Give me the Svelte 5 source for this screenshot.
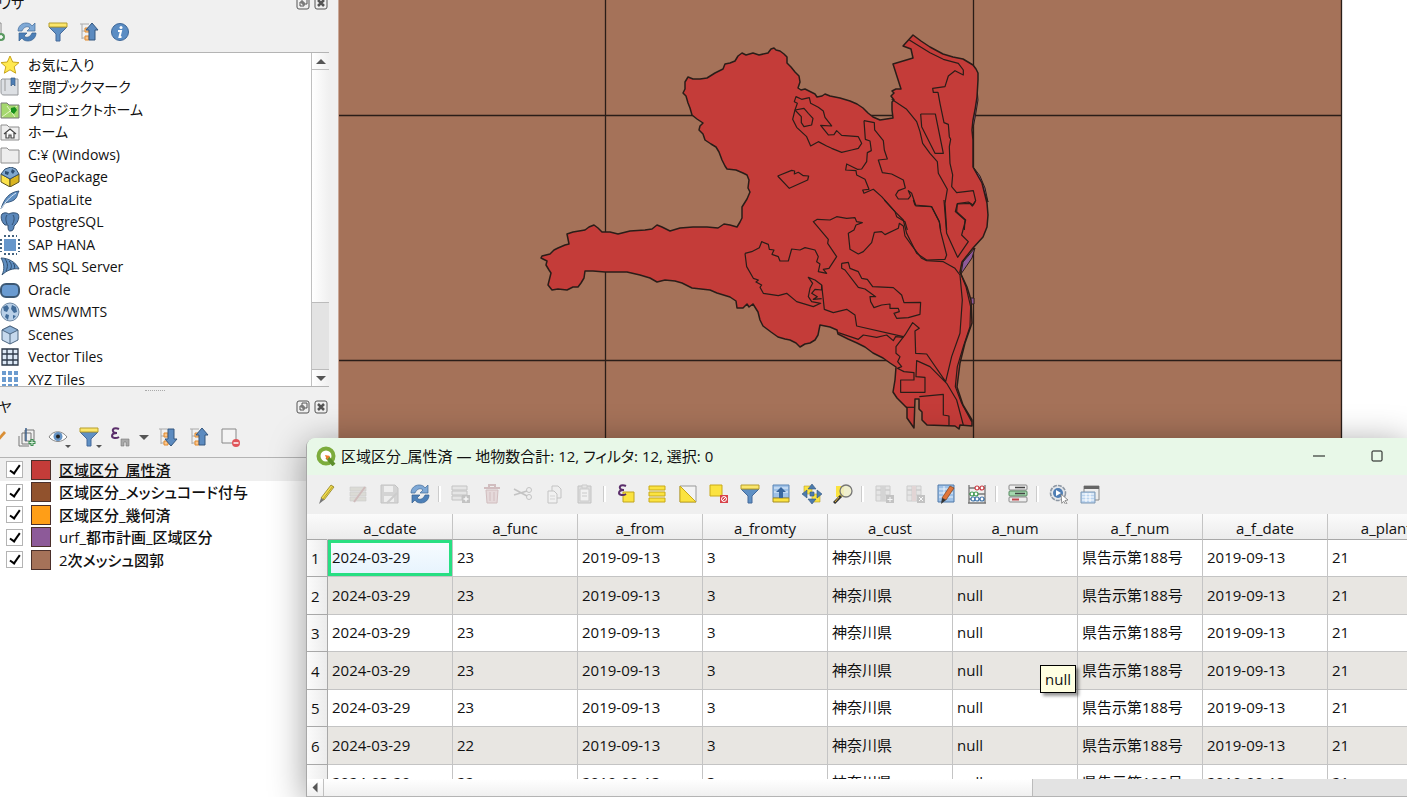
<script lang="ts">
  type Layer = { name: string; color: string; visible: boolean; current?: boolean };
  type Tool = { icon: string; label: string; off?: boolean; menu?: boolean };

  const arrowUp = '<path d="M13 1l6 7h-3v10h-6V8H7z" fill="#5c8bc0" stroke="#34577f"/>';
  const treeRows =
    '<path d="M1 2h9M3 2v15M3 9h3M3 16h3" stroke="#aaa" fill="none"/><path d="M6 6h4v4H6zM6 14h4v4H6z" fill="#fcc58b" stroke="#e08a2c"/>';
  const minus = '<circle cx="16" cy="16" r="4" fill="#e0555a"/><path d="M13.500 16h5" stroke="#fff" stroke-width="1.500"/>';

  // 20x20 drawings
  const icons: Record<string, string> = {
    add: '<path d="M4 1h11v17H4z" fill="#fff" stroke="#888"/><circle cx="15" cy="15" r="4" fill="#5a9a62"/><path d="M15 13v4M13 15h4" stroke="#fff" stroke-width="1.500"/>',
    refresh:
      '<path d="M1 9C1 4 5 1 9 1c3 0 5 1 6 3l3-3v8h-8l3-3c-3-3-7 0-8 3z" fill="#7fa9d6" stroke="#416a99" stroke-width=".7"/><path d="M19 11c0 5-4 8-8 8-3 0-5-1-6-3l-3 3v-8h8l-3 3c3 3 7 0 8-3z" fill="#4d80b8" stroke="#345e8e" stroke-width=".7"/>',
    filter:
      '<path d="M1 5h18l-7 7v7H8v-7z" fill="#5f90c4" stroke="#44699a"/><path d="M1 1h18v4H1z" fill="#fbe66c" stroke="#b79e2c"/>',
    collapse: treeRows + arrowUp,
    expand: treeRows + '<path d="M13 19l6-7h-3V2h-6v10H7z" fill="#5c8bc0" stroke="#34577f"/>',
    info: '<circle cx="10" cy="10" r="8.500" fill="#5b8dc4" stroke="#3e6798"/><circle cx="11" cy="5.500" r="1.500" fill="#fff"/><path d="M8 9h3l-1.500 6h2" stroke="#fff" stroke-width="2" fill="none"/>',
    star: '<path d="M10 1l2.700 6 6.300.6-4.800 4.200 1.500 6.400L10 14.800l-5.700 3.400 1.500-6.400L1 7.600 7.300 7z" fill="#ffe94f" stroke="#c9a51c"/>',
    bookmark:
      '<path d="M2 2h16v16H4c-2 0-3-1-3-3V3z" fill="#dde0e4" stroke="#94979b"/><path d="M5 2v12" stroke="#999"/><path d="M11 1h4v8l-2-2-2 2z" fill="#4f7fb5" stroke="#365b86" stroke-width=".7"/>',
    project:
      '<path d="M1 3h6l2 2h10v13H1z" fill="#a5d86e" stroke="#787878"/><path d="M2 17L17 6M7 6l8 11" stroke="#e8f6c9"/><path d="M11 8l4-1 2 3-3 4-3-2z" fill="#178f1c"/>',
    home: '<path d="M1 3h6l2 2h10v13H1z" fill="#eee" stroke="#8e8e8e"/><path d="M4 12l6-5 6 5M6 11v5h3v-3h2v3h3v-5" fill="#fff" stroke="#444" stroke-width="1.200"/>',
    folder: '<path d="M1 3h6l2 2h10v13H1z" fill="#ededed" stroke="#8e8e8e"/>',
    geopackage:
      '<path d="M1 7l9 5v8l-9-5z" fill="#fbe14a" stroke="#5b5220"/><path d="M19 7l-9 5v8l9-5z" fill="#d9b420" stroke="#5b5220"/><path d="M1 7l4-5 6-2 5 2 3 5-9 5z" fill="#7fa7cf" stroke="#34506f"/><path d="M5 4l4 1-1 3-3-1zM12 2l3 2-2 3-2-2z" fill="#2c4c70"/>',
    feather:
      '<path d="M1 19C4 8 10 2 19 1c-2 3-1 6-5 9-3 2-6 2-9 3z" fill="#5f8fc2" stroke="#395a80"/><path d="M1 19C6 11 10 7 16 3" stroke="#dce9f6" fill="none"/>',
    elephant:
      '<path d="M2 2c3-2 5-1 7 0 3-2 8-1 9 0 2 3 0 8-3 11l-1 1c0 3-1 5-4 5-2 0-2-3-2-6H5C2 11 0 5 2 2z" fill="#5b88bb" stroke="#314e70"/><path d="M7 3c-2 3-1 6 0 9M13 3c2 3 1 7-1 10" stroke="#314e70" fill="none"/>',
    chip: '<path d="M4 4h12v12H4z" fill="#6797cb"/><path d="M4 1h13M4 19h13M1 4v13M19 4v13" stroke="#43627f" stroke-width="2" stroke-dasharray="2 2"/>',
    mssql:
      '<path d="M1 1c7 0 15 4 18 11-6-1-12 1-17 6 3-6 2-12-1-17z" fill="#5f8fc2" stroke="#3a5878"/><path d="M5 2c3 4 3 8 1 12M9 4c3 3 3 6 1 9M13 6c2 2 2 4 1 6" stroke="#2e4c6d" fill="none"/>',
    oracle: '<rect x="1" y="4" width="18" height="13" rx="5" fill="#6a9bd1" stroke="#3c5874" stroke-width="2"/>',
    globe:
      '<circle cx="10" cy="10" r="9" fill="#b9d0e8" stroke="#6d87a3"/><path d="M3 5l4-2 2 3-2 4-3-1zM12 3l4 2 1 5-3 1-3-4zM6 12l3 1-1 5-3-3zM13 13l3 1-3 3z" fill="#416b98"/>',
    cube: '<path d="M10 1l8 4v10l-8 4-8-4V5z" fill="#c6d9ed" stroke="#4d6680"/><path d="M2 5l8 4 8-4-8-4z" fill="#8fb2d6" stroke="#4d6680"/><path d="M10 9v10" stroke="#4d6680"/>',
    grid: '<path d="M2 2h16v16H2z" fill="#dde9f6"/><path d="M2 2h16v16H2zM7 2v16M13 2v16M2 7h16M2 13h16" stroke="#2d3848" stroke-width="1.300" fill="none"/>',
    tiles:
      '<path d="M2 1h4v4H2zM8 1h4v4H8zM14 1h4v4h-4zM2 7h4v5H2zM8 7h4v5H8zM14 7h4v5h-4zM2 14h4v4H2zM8 14h4v4H8zM14 14h4v4h-4z" fill="#6b9bcf"/>',
    brush: '<path d="M10 13l8-9 2 2-8 9z" fill="#d98e35"/>',
    group:
      '<path d="M5 6h9v11H5zM2 9v10h10" fill="none" stroke="#777"/><path d="M8 3h9v11H8z" fill="none" stroke="#777"/><path d="M9 1v13" stroke="#3d618d" stroke-width="1.500"/><path d="M15 12v7M11.500 15.500h7" stroke="#3f8d52" stroke-width="3"/><path d="M15 13v5M12.500 15.500h5" stroke="#d9f0dc"/>',
    eye: '<path d="M1 10c4-7 13-7 18 0-5 6-13 6-18 0z" fill="#fff" stroke="#888"/><circle cx="10" cy="9.500" r="4.500" fill="#6593c4"/><circle cx="10" cy="9.500" r="2" fill="#222"/>',
    epsilon:
      '<path d="M9 2C5 0 2 2 3 4c0 2 2 2 4 2-3 0-5 1-5 3s4 3 7 1" fill="none" stroke="#5b2f6b" stroke-width="2"/><path d="M11 19v-7h8v7h-3v-4h-2v4z" fill="#aaa" stroke="#777" stroke-width=".6"/>',
    remove: '<path d="M2 2h14v14H2z" fill="#f4f4f4" stroke="#888"/>' + minus,
    pencil:
      '<path d="M4 14L14 1l3 2L7 16z" fill="#f2de4e" stroke="#8d7d22" stroke-width=".8"/><path d="M4 14l3 2-5 4z" fill="#777"/><path d="M6 15L16 2" stroke="#b49e2e"/>',
    multiedit:
      '<path d="M2 3h16v4H2zM2 8h16v4H2zM2 13h16v4H2z" fill="#c9c9bd" stroke="#aaa" stroke-width=".6"/><path d="M6 18L17 3" stroke="#b08888" stroke-width="2"/>',
    save: '<path d="M2 1h14l3 3v15H2z" fill="#bbb" stroke="#999"/><path d="M5 2h9v6H5zM5 12h10v6H5z" fill="#eee"/><path d="M8 19L18 9" stroke="#aaa" stroke-width="2"/>',
    addfeature:
      '<path d="M1 2h15v4H1zM1 7h15v4H1zM1 12h10v4H1z" fill="#ddd" stroke="#999"/><path d="M11 11h8v8h-8z" fill="#999"/><path d="M15 12.500v5M12.500 15h5" stroke="#fff" stroke-width="1.500"/>',
    trash:
      '<path d="M2 4h16M7 3V1h6v2" stroke="#b58d90" stroke-width="2" fill="none"/><path d="M4 6h12l-1 13H5z" fill="#dcc5c7" stroke="#b58d90"/><path d="M8 8v9M12 8v9" stroke="#b58d90"/>',
    cut: '<path d="M1 5l13 7M1 11l13-4" stroke="#999" stroke-width="1.500"/><circle cx="16" cy="6" r="2.500" fill="none" stroke="#999"/><circle cx="16" cy="13" r="2.500" fill="none" stroke="#999"/>',
    copy: '<path d="M8 2h6l3 3v9H8z" fill="#eee" stroke="#999"/><path d="M4 7h6l3 3v9H4z" fill="#f4f4f4" stroke="#999"/><path d="M6 12h5M6 15h5" stroke="#bbb"/>',
    paste: '<path d="M3 2h13v17H3z" fill="#ccc" stroke="#999"/><path d="M5 5h9v12H5z" fill="#f4f4f4" stroke="#aaa"/><path d="M7 9h5M7 12h5M7 1h5v3H7z" stroke="#aaa" fill="#ddd"/>',
    selectexpr:
      '<path d="M7 8h11v10H7z" fill="#fbe340" stroke="#c0a51f"/><path d="M10 2C6 0 3 2 4 4c0 2 2 2 4 2-3 0-5 1-5 3s4 3 7 1" fill="none" stroke="#5b2f6b" stroke-width="2"/>',
    selectall: '<path d="M2 2h16v4H2zM2 8h16v4H2zM2 14h16v4H2z" fill="#fbe340" stroke="#c8a918"/>',
    invert: '<path d="M2 2h16v16H2z" fill="#f3f3f3" stroke="#999"/><path d="M2 2l16 16H2z" fill="#fbe340" stroke="#c8a918"/>',
    deselect:
      '<path d="M1 1h12v11H1z" fill="#fbe340" stroke="#c8a918"/><path d="M11 11h8v8h-8z" fill="#d8434b"/><circle cx="15" cy="15" r="2.500" stroke="#fff" fill="none"/><path d="M13 17l4-4" stroke="#fff"/>',
    movetop:
      '<path d="M2 1h16v13H2z" fill="#9fc2e8" stroke="#5d86b5"/><path d="M2 14h16v4H2z" fill="#fbe340" stroke="#a58d23"/><path d="M3 4h14M3 8h14" stroke="#e4effa"/><path d="M10 3l5 5h-3v6H8V8H5z" fill="#38679f"/>',
    pan: '<path d="M2 2h8v8H2zM10 10h8v8h-8z" fill="#fbe340" stroke="#bda329" stroke-width=".6"/><path d="M10 0l4 5H6zM10 20l4-5H6zM0 10l5-4v8zM20 10l-5-4v8zM8 8h4v4H8z" fill="#4d7cae" stroke="#34577f" stroke-width=".6"/>',
    zoom: '<path d="M3 2h8v11H3z" fill="#fbe340"/><path d="M8 12l-7 7" stroke="#333" stroke-width="3"/><path d="M6 13l-4 5" stroke="#e8b73a"/><circle cx="13" cy="7" r="6" fill="#eeeec9" fill-opacity=".85" stroke="#777" stroke-width="1.300"/>',
    addfield: '<path d="M2 2h14v4H2zM2 6h14v11H2zM7 2v15M11 2v15M2 11h14" fill="#ddd" stroke="#aaa"/><path d="M7 2h4v15H7z" fill="#bbb"/><path d="M12 11h8v8h-8z" fill="#999"/><path d="M16 13v5M13.500 15.500h5" stroke="#fff"/>',
    delfield: '<path d="M2 2h14v4H2zM2 6h14v11H2zM7 2v15M11 2v15M2 11h14" fill="#ddd" stroke="#aaa"/><path d="M7 2h4v15H7z" fill="#d6bcbc"/><path d="M12 11h8v8h-8z" fill="#999"/><path d="M14 13l4 4M18 13l-4 4" stroke="#fff"/>',
    organize:
      '<path d="M2 1h16v17H2z" fill="#9fc2e8" stroke="#4f79a8"/><path d="M3 5h14M3 9h14M3 13h14M8 2v15" stroke="#e9f2fb"/><path d="M6 14L14 2l4 2-8 12z" fill="#e0763a" stroke="#7b3d1a" stroke-width=".7"/><path d="M6 14l4 2-5 4z" fill="#333"/>',
    abacus:
      '<path d="M2 1v18M18 1v18M1 19h18M2 4h16M2 10h16M2 15h16" stroke="#777" stroke-width="1.300"/><g fill="#fff" stroke-width="1.200"><g stroke="#c9373e"><circle cx="10" cy="4" r="2"/><circle cx="15" cy="4" r="2"/></g><g stroke="#3f9a50"><circle cx="5" cy="10" r="2"/><circle cx="9" cy="10" r="2"/></g><g stroke="#4276ab"><circle cx="6" cy="15" r="2"/><circle cx="10" cy="15" r="2"/><circle cx="15" cy="15" r="2"/></g></g>',
    conditional:
      '<rect x="1" y="1" width="18" height="5" rx="1" fill="#eee" stroke="#888"/><rect x="1" y="7" width="18" height="5" rx="1" fill="#a5d8af" stroke="#55885e"/><rect x="1" y="13" width="18" height="5" rx="1" fill="#eee" stroke="#888"/><path d="M7 3.500h10M7 9.500h10" stroke="#444" stroke-width="1.500"/><path d="M4 15.500h7" stroke="#c1494f" stroke-width="2"/>',
    action:
      '<circle cx="9" cy="9" r="7.500" fill="#e5e8ec" stroke="#8d97a3" stroke-width="1.600" stroke-dasharray="4 1"/><circle cx="9" cy="9" r="5" fill="#4f7eb4"/><path d="M7 6l5 3-5 3z" fill="#fff"/><path d="M12 10l7 6-3 .5 2 3-1.500.8-1.700-3-2 2z" fill="#fff" stroke="#777" stroke-width=".8"/>',
    dock: '<path d="M4 2h15v14H4z" fill="#eee" stroke="#888"/><path d="M4 2h15v3H4z" fill="#666"/><path d="M1 8h14v11H1z" fill="#b9d3ef" stroke="#7f99b5"/><path d="M2 10h12M2 13h12M2 16h12M6 9v9M10 9v9" stroke="#fff"/>',
  };

  const browserTools: Tool[] = [
    { icon: "add", label: "レイヤを追加" },
    { icon: "refresh", label: "再読み込み" },
    { icon: "filter", label: "フィルタ" },
    { icon: "collapse", label: "全て折りたたむ" },
    { icon: "info", label: "プロパティ" },
  ];

  const browserItems = [
    ["star", "お気に入り"],
    ["bookmark", "空間ブックマーク"],
    ["project", "プロジェクトホーム"],
    ["home", "ホーム"],
    ["folder", "C:¥ (Windows)"],
    ["geopackage", "GeoPackage"],
    ["feather", "SpatiaLite"],
    ["elephant", "PostgreSQL"],
    ["chip", "SAP HANA"],
    ["mssql", "MS SQL Server"],
    ["oracle", "Oracle"],
    ["globe", "WMS/WMTS"],
    ["cube", "Scenes"],
    ["grid", "Vector Tiles"],
    ["tiles", "XYZ Tiles"],
  ];

  const layerTools: Tool[] = [
    { icon: "brush", label: "スタイル" },
    { icon: "group", label: "グループを追加" },
    { icon: "eye", label: "地図テーマ", menu: true },
    { icon: "filter", label: "凡例フィルタ", menu: true },
    { icon: "epsilon", label: "式で凡例をフィルタ" },
    { icon: "menu", label: "フィルタメニュー" },
    { icon: "expand", label: "全て展開" },
    { icon: "collapse", label: "全て折りたたむ" },
    { icon: "remove", label: "レイヤを削除" },
  ];

  let layers = $state<Layer[]>([
    { name: "区域区分_属性済", color: "#c43c39", visible: true, current: true },
    { name: "区域区分_メッシュコード付与", color: "#91522d", visible: true },
    { name: "区域区分_幾何済", color: "#ff9e17", visible: true },
    { name: "urf_都市計画_区域区分", color: "#8d5a99", visible: true },
    { name: "2次メッシュ図郭", color: "#a57259", visible: true },
  ]);

  const tableTools: Tool[][] = [
    [
      { icon: "pencil", label: "編集モード切替" },
      { icon: "multiedit", label: "マルチ編集", off: true },
      { icon: "save", label: "編集を保存", off: true },
      { icon: "refresh", label: "再読み込み" },
    ],
    [
      { icon: "addfeature", label: "地物を追加", off: true },
      { icon: "trash", label: "地物を削除", off: true },
      { icon: "cut", label: "切り取り", off: true },
      { icon: "copy", label: "コピー", off: true },
      { icon: "paste", label: "貼り付け", off: true },
    ],
    [
      { icon: "selectexpr", label: "式で選択" },
      { icon: "selectall", label: "全て選択" },
      { icon: "invert", label: "選択を反転" },
      { icon: "deselect", label: "選択を解除" },
      { icon: "filter", label: "フィルタ" },
      { icon: "movetop", label: "選択を先頭へ" },
      { icon: "pan", label: "選択へパン" },
      { icon: "zoom", label: "選択へズーム" },
    ],
    [
      { icon: "addfield", label: "新規フィールド", off: true },
      { icon: "delfield", label: "フィールド削除", off: true },
      { icon: "organize", label: "列を編成" },
      { icon: "abacus", label: "フィールド計算機" },
    ],
    [{ icon: "conditional", label: "条件付き書式" }],
    [
      { icon: "action", label: "アクション" },
      { icon: "dock", label: "ドッキング" },
    ],
  ];

  const columns = ["a_cdate", "a_func", "a_from", "a_fromty", "a_cust", "a_num", "a_f_num", "a_f_date", "a_planty"];
  const rows = ["23", "23", "23", "23", "23", "22", "22"].map((func) => [
    "2024-03-29",
    func,
    "2019-09-13",
    "3",
    "神奈川県",
    "null",
    "県告示第188号",
    "2019-09-13",
    "21",
  ]);

  const outline =
    "742,218 742,207 747,199 750,192 748,188 749,180 747,175 743,173 736,170 727,169 725,166 722,160 719,152 716,147 711,144 705,140 703,134 699,130 700,126 703,123 697,119 692,115 690,108 688,103 686,96 683,93 685,89 685,82 688,77 693,79 700,79 707,78 715,73 723,69 725,64 730,63 735,61 738,56 742,53 746,55 753,53 759,55 768,53 771,49 774,48 776,50 780,51 784,54 787,57 787,63 791,67 795,72 799,76 800,82 798,88 801,90 805,89 811,92 815,94 817,97 822,96 825,94 830,96 840,98 850,101 857,104 863,108 868,113 873,117 880,120 893,118 892,110 892,102 894,100 891,96 894,93 892,91 896,89 901,89 893,64 913,58 911,49 903,46 913,35 921,41 930,47 943,54 953,57 963,59 973,65 976,69 978,73 978,80 977,97 975,110 973,120 972,130 973,140 973,167 978,176 982,183 987,203 988,215 987,227 983,237 973,248 962,262 960,272 967,287 971,300 972,323 965,343 960,363 957,387 963,405 972,420 972,426 960,425 959,429 955,426 927,425 922,420 922,412 919,409 919,399 915,399 914,428 907,418 907,408 897,398 893,392 895,380 896,367 890,363 883,358 873,353 865,347 857,343 848,339 838,334 837,330 830,327 820,325 818,335 815,340 810,343 805,344 800,347 796,343 790,340 785,339 778,337 771,332 763,326 760,320 758,312 753,304 749,307 747,304 743,308 737,308 736,301 730,297 717,293 710,290 692,288 682,283 675,281 665,280 657,282 650,278 640,275 627,272 605,272 593,271 585,271 584,278 581,283 578,287 573,287 567,290 558,289 552,290 548,285 551,273 549,270 546,265 547,261 541,258 542,256 550,254 554,250 558,248 565,245 569,244 568,239 567,234 573,232 585,230 589,227 594,225 598,228 602,232 610,232 618,234 630,231 645,230 652,229 657,225 662,227 670,231 680,228 693,227 707,227 718,228 724,224 730,225 737,227 740,222";

  // boundaries inside the area, traced at three units per map pixel
  const zones = [
    {
      origin: "660 30",
      lines: [
        "405,240 412,220 403,215 408,200 425,208 448,203 452,220 475,232 490,243 495,262 515,288 482,286 505,315 522,314 530,302 545,316 595,320 605,340 595,355 575,360 545,367 515,355 500,348 475,335 452,348 440,320 410,292 398,268 405,240",
        "405,240 432,235 445,250 459,265 455,285 432,290 424,278 424,260 405,240",
        "353,438 395,421 404,423 403,432 415,427 430,437 446,438 443,450 388,475 353,438",
      ],
    },
    {
      origin: "830 30",
      lines: [
        "238,30 300,68 340,88 385,100 400,120 400,135 375,122 355,138 345,170 308,175 310,187 324,187 330,220 342,278 355,283 358,320 362,328 358,350 360,400 368,435 365,470 380,488 430,482 437,512 430,525 415,516 382,521 376,545 405,570 403,600",
        "185,208 230,238 260,275 270,305 278,340 300,370 322,395 325,430 352,478 345,520 350,600",
        "272,252 316,252 340,370 315,370 275,290 272,252",
        "102,272 133,278 134,300 160,332 163,360 172,387 145,390 157,428 185,432 220,450 226,474 205,482 197,495 205,507 235,507 242,498 235,482 245,490 258,528 305,530 328,575 332,600",
        "102,272 106,328 120,333 124,362 112,368 110,395 95,417 82,418 50,402 47,420 78,422 80,435 105,448 117,478 98,480 102,490 130,478 155,500 195,545 200,560 225,575 232,600",
      ],
    },
    {
      origin: "730 200",
      lines: [
        "45,160 65,155 88,143 95,125 115,133 118,148 132,150 126,163 145,170 150,183 175,183 185,147 210,150 225,143 255,150 265,170 260,185 270,192 265,215 290,220 280,208 297,205 320,170 293,130 295,118 250,65 262,58 300,60 320,50 350,55 375,53 380,65 397,68 378,75 372,90 355,100 360,148 385,162 400,155 425,128 433,97 455,95 465,104 505,85 508,70 520,78 525,108 548,140 575,175 590,182 640,185 675,205 690,225 697,300 690,400 665,470 647,545 590,462 557,460 555,393 568,385 548,368 525,405 498,440 498,460 510,470 503,485 515,500 502,505 522,515 552,518 552,540 512,540 512,577 585,577 585,532 558,530 560,482 600,500 650,550 680,600 700,675",
        "45,160 50,200 70,235 85,240 78,246 95,255 90,262 100,280 145,287 170,280 200,305 250,320 272,310 245,305 235,290 240,265 248,250 235,232 255,240 275,255 275,270 255,268 245,280 262,290 250,298 275,296",
        "275,255 280,300 283,328 310,338 350,328 375,345 380,378 520,410",
        "325,398 385,418 400,405 440,412 470,405 490,422 497,410 520,412",
        "335,190 355,187 360,205 385,215 395,235 412,238 428,260 490,263 515,285 522,308 572,307 570,343 535,353 500,355 492,340 508,335 505,325 480,325 480,312 455,315 432,323 422,305 420,290 437,290 405,267 385,262 345,210 335,205 335,190",
        "463,0 495,35 520,60 530,100 560,160 590,180 645,178 650,165 632,95 628,65 605,20 555,15 550,0",
        "642,0 650,100 683,172 715,125 695,105 707,60 680,35 682,12 720,10 727,18 735,5",
        "568,590 640,583 640,645 657,648 657,675",
        "528,622 553,622",
        "690,215 708,260 722,320 720,380 700,440 682,500 676,560 695,610 725,665",
      ],
    },
  ];
</script>

{#snippet icon(name: string)}
  <svg class="icon" viewBox="0 0 20 20" aria-hidden="true">{@html icons[name]}</svg>
{/snippet}

{#snippet tool(t: Tool)}
  {#if t.icon === "menu"}
    <button type="button" class="tool narrow" aria-label={t.label}><span class="caret"></span></button>
  {:else}
    <button type="button" class="tool" class:off={t.off} disabled={t.off} aria-label={t.label}>
      {@render icon(t.icon)}
      {#if t.menu}<span class="caret small"></span>{/if}
    </button>
  {/if}
{/snippet}

{#snippet dockTitle(text: string)}
  <header class="dock-title">
    <h2>{text}</h2>
    <button type="button" aria-label="フロート">
      <svg viewBox="0 0 14 14"><rect x="1" y="1" width="12" height="12" rx="2" /><path d="M6 3h5v5H6zM4 6h4v4H4z" /></svg>
    </button>
    <button type="button" aria-label="閉じる">
      <svg viewBox="0 0 14 14"><rect x="1" y="1" width="12" height="12" rx="2" /><path d="M4 4l6 6M10 4l-6 6" stroke-width="2.500" /></svg>
    </button>
  </header>
{/snippet}

<div class="app">
  <aside class="docks">
    <section class="dock browser">
      {@render dockTitle("ブラウザ")}
      <div class="toolbar">
        {#each browserTools as t}{@render tool(t)}{/each}
      </div>
      <div class="tree">
        <ul>
          {#each browserItems as [ic, name]}
            <li>{@render icon(ic)}<span>{name}</span></li>
          {/each}
        </ul>
        <div class="vscroll">
          <button type="button" aria-label="上へ"><span class="caret up"></span></button>
          <div class="track"><div class="thumb"></div></div>
          <button type="button" aria-label="下へ"><span class="caret"></span></button>
        </div>
      </div>
    </section>

    <div class="splitter"></div>

    <section class="dock layers">
      {@render dockTitle("レイヤ")}
      <div class="toolbar">
        {#each layerTools as t}{@render tool(t)}{/each}
      </div>
      <ul class="layer-list">
        {#each layers as l}
          <li class:current={l.current}>
            <label>
              <input type="checkbox" bind:checked={l.visible} />
              <i class="swatch" style="background: {l.color}"></i>
              <span>{l.name}</span>
            </label>
          </li>
        {/each}
      </ul>
    </section>
  </aside>

  <main class="map">
    <svg viewBox="339 0 1068 797" preserveAspectRatio="xMinYMin slice" role="img" aria-label="地図">
      <rect x="339" y="-10" width="1002" height="820" fill="#a57259" />
      <path class="mesh" d="M605.500 0V797M973.500 0V797M1341.500 0V797M339 115.500H1341M339 360.500H1341" />
      <path class="river" d="M977 88l1 12-3 18-2 10-1-8 3-14zM974 168l6 8 5 12 3 14-6-16zM961 274l2-12 12-14-3 10zM970 298h4v6h-4z" />
      <polygon class="area" points={outline} />
      {#each zones as z}
        <g class="line" transform="translate({z.origin}) scale(0.3333)">
          {#each z.lines as points}<polyline {points} />{/each}
        </g>
      {/each}
    </svg>
  </main>

  <section class="window" aria-label="属性テーブル">
    <header class="titlebar">
      <svg class="icon" viewBox="0 0 20 20">
        <circle cx="10" cy="10" r="7.500" fill="#fff" stroke="#7cac3c" stroke-width="4" />
        <path d="M11 11l7 8" stroke="#5d8f2b" stroke-width="4" />
        <path d="M9 9l5 1-3 4z" fill="#ee7b2d" />
      </svg>
      <h1>区域区分_属性済 — 地物数合計: 12, フィルタ: 12, 選択: 0</h1>
      <button type="button" aria-label="最小化"><svg viewBox="0 0 12 12"><path d="M0 6h12" /></svg></button>
      <button type="button" aria-label="最大化"><svg viewBox="0 0 12 12"><rect x="1" y="1" width="10" height="10" rx="1" /></svg></button>
    </header>

    <div class="toolbar table-tools">
      {#each tableTools as group, i}
        {#if i > 0}<span class="sep"></span>{/if}
        {#each group as t}{@render tool(t)}{/each}
      {/each}
    </div>

    <div class="grid">
      <table>
        <thead>
          <tr>
            <th class="corner" aria-label="行"></th>
            {#each columns as c}<th scope="col">{c}</th>{/each}
          </tr>
        </thead>
        <tbody>
          {#each rows as row, r}
            <tr>
              <th scope="row">{r + 1}</th>
              {#each row as cell, c}
                <td class:focus={r === 0 && c === 0}>{cell}</td>
              {/each}
            </tr>
          {/each}
        </tbody>
      </table>
    </div>

    <div class="hscroll">
      <button type="button" aria-label="左へ"><span class="caret left"></span></button>
      <div class="thumb"></div>
    </div>

    <div class="tooltip" role="tooltip">null</div>
  </section>
</div>

<style>
  :global(body) {
    margin: 0;
  }
  .app {
    position: relative;
    display: flex;
    height: 100vh;
    overflow: hidden;
    background: #fff;
    color: #111;
    font-family: "Open Sans", "Noto Sans CJK JP", sans-serif;
    font-size: 14px;
    line-height: 20px;
    font-feature-settings: "palt";
  }
  ul {
    list-style: none;
    margin: 0;
    padding: 0;
  }
  h1, h2 {
    margin: 0;
    font-size: 15px;
    font-weight: 400;
  }
  button {
    display: flex;
    align-items: center;
    justify-content: center;
    padding: 0;
    border: 0;
    background: none;
    font: inherit;
  }
  .icon {
    flex: none;
    width: 20px;
    height: 20px;
  }

  .docks {
    flex: none;
    display: flex;
    flex-direction: column;
    width: 338px;
    border-right: 1px solid #c9a898;
    background: #f0f0f0;
  }
  .dock {
    display: flex;
    flex-direction: column;
    min-height: 0;
    margin-right: 9px;
  }
  .browser {
    flex: 0 0 387px;
  }
  .browser .dock-title {
    margin-top: -9px;
  }
  .browser .toolbar {
    margin-bottom: 3px;
  }
  .layers {
    flex: 1;
  }
  .dock-title {
    display: flex;
    align-items: center;
    gap: 4px;
    height: 24px;
    padding-right: 1px;
  }
  .dock-title h2 {
    flex: 1;
    margin-left: -26px;
    font-size: 14px;
  }
  .dock-title svg {
    width: 14px;
    height: 14px;
    fill: none;
    stroke: #555;
  }
  .toolbar {
    display: flex;
    align-items: center;
    flex: none;
    height: 34px;
  }
  .docks .toolbar {
    margin-left: -20px;
  }
  .layers .toolbar {
    height: 36px;
    margin-bottom: 2px;
  }
  .tool {
    position: relative;
    flex: none;
    width: 31px;
    height: 30px;
  }
  .tool.narrow {
    width: 17px;
  }
  .tool.off {
    opacity: 0.5;
  }
  .caret {
    border: 5px solid transparent;
    border-top-color: #555;
    border-bottom: 0;
  }
  .caret.small {
    position: absolute;
    right: 2px;
    bottom: 4px;
    border-width: 3px;
    border-bottom: 0;
  }
  .caret.up {
    transform: rotate(180deg);
  }
  .caret.left {
    transform: rotate(90deg);
  }

  .tree {
    flex: 1;
    display: flex;
    min-height: 0;
    border: 1px solid #b4b4b4;
    border-width: 1px 0;
    background: #fff;
  }
  .tree ul {
    flex: 1;
    overflow: hidden;
  }
  .tree li {
    display: flex;
    align-items: center;
    gap: 8px;
    height: 23px;
  }
  .tree li:nth-child(even) {
    height: 22px;
  }
  .vscroll {
    display: flex;
    flex-direction: column;
    width: 17px;
    border-left: 1px solid #c0c0c0;
    background: linear-gradient(90deg, #fff, #f0f0f0);
  }
  .vscroll button {
    height: 16px;
  }
  .vscroll .track {
    flex: 1;
    display: flex;
    flex-direction: column;
    justify-content: flex-end;
    border-top: 1px solid #c0c0c0;
  }
  .vscroll .thumb {
    height: 22%;
    border: 1px solid #bbb;
    border-width: 1px 0;
    background: #e3e3e3;
  }
  .splitter {
    flex: none;
    height: 8px;
  }
  .splitter::after {
    content: "";
    display: block;
    width: 20px;
    margin-left: 43%;
    padding-top: 3px;
    border-bottom: 1px dotted #aaa;
  }

  .layer-list {
    flex: 1;
    margin-right: -9px;
    border-top: 1px solid #b4b4b4;
    background: #fff;
    font-size: 15px;
    font-weight: 500;
  }
  .layer-list li {
    height: 23px;
  }
  .layer-list li:nth-child(even) {
    height: 22px;
  }
  .layer-list label {
    display: flex;
    align-items: center;
    height: 100%;
    padding-left: 6px;
  }
  .current {
    background: #efefef;
  }
  .current span {
    text-decoration: underline;
  }
  .layer-list input {
    appearance: none;
    display: flex;
    justify-content: center;
    box-sizing: border-box;
    width: 17px;
    height: 17px;
    margin: 0 8px 0 0;
    border: 1px solid #b4b4b4;
    background: #fff;
  }
  .layer-list input:checked::after {
    content: "";
    width: 4px;
    height: 9px;
    margin-top: 1px;
    border: solid #000;
    border-width: 0 2px 2px 0;
    transform: rotate(35deg);
  }
  .swatch {
    box-sizing: border-box;
    width: 20px;
    height: 20px;
    margin-right: 8px;
    border: 1px solid #4a2f2a;
  }

  .map {
    flex: 1;
    min-width: 0;
  }
  .map svg {
    display: block;
    width: 100%;
    height: 100%;
  }
  .mesh {
    fill: none;
    stroke: #2a1d18;
    stroke-width: 1.3;
  }
  .area {
    fill: #c43c39;
    stroke: #2a1d18;
    stroke-width: 1.5;
    stroke-linejoin: round;
  }
  .river {
    fill: #8d5a99;
    stroke: #2a1d18;
  }
  .line {
    fill: none;
    stroke: #2a1d18;
    stroke-width: 3.6;
    stroke-linejoin: round;
  }

  .window {
    position: absolute;
    inset: 438px 0 0 306px;
    display: flex;
    flex-direction: column;
    border-left: 1px solid #a8a8a8;
    border-bottom: 1px solid #b4b4b4;
    border-top-left-radius: 9px;
    background: #efefef;
    box-shadow: 0 6px 36px rgba(0, 0, 0, 0.4);
    font-size: 15px;
  }
  .titlebar {
    display: flex;
    align-items: center;
    height: 35px;
    padding: 0 1px 2px 9px;
    border-top-left-radius: 8px;
    background: #e8f8e8;
  }
  .titlebar h1 {
    flex: 1;
    margin-left: 5px;
    overflow: hidden;
    white-space: nowrap;
  }
  .titlebar button {
    width: 58px;
    height: 100%;
  }
  .titlebar button svg {
    width: 12px;
    height: 12px;
    fill: none;
    stroke: #111;
  }
  .table-tools {
    height: 37px;
    padding: 0 0 2px 4px;
  }
  .sep {
    flex: none;
    width: 2px;
    height: 16px;
    margin: 0 4px 0 3px;
    border-left: 1px solid #ccc;
    background: #fff;
  }
  .grid {
    flex: 1;
    min-height: 0;
    overflow: hidden;
    background: #fff;
  }
  table {
    width: 1146px;
    table-layout: fixed;
    border-spacing: 0;
  }
  th, td {
    box-sizing: border-box;
    width: 125px;
    padding: 0 0 2px 4px;
    border-right: 1px solid #c4c4c4;
    border-bottom: 1px solid #c4c4c4;
    text-align: left;
    font-weight: 400;
    white-space: nowrap;
  }
  thead th {
    height: 26px;
    padding: 3px 0 0;
    border-bottom-color: #a8a8a8;
    background: linear-gradient(#fbfbfb, #ececec);
    text-align: center;
  }
  thead .corner {
    width: 21px;
    border-right-color: transparent;
  }
  tbody th {
    padding: 0;
    border-color: #a8a8a8;
    background: linear-gradient(90deg, #fbfbfb, #ececec);
    text-indent: 4px;
  }
  tbody tr {
    height: 37px;
  }
  tbody tr:nth-child(even) {
    height: 38px;
  }
  tbody tr:nth-child(even) td {
    background: #e8e6e2;
  }
  .focus {
    background: linear-gradient(#f8fcff, #e6f3fd);
    box-shadow: inset 0 0 0 3px #27df82;
  }
  .hscroll {
    display: flex;
    flex: none;
    justify-content: space-between;
    height: 17px;
    background: linear-gradient(#fff, #f0f0f0);
  }
  .hscroll button {
    width: 17px;
    border-right: 1px solid #c0c0c0;
  }
  .hscroll .thumb {
    width: 34%;
    border-left: 1px solid #bbb;
    background: #e3e3e3;
  }
  .tooltip {
    position: absolute;
    left: 733px;
    top: 227px;
    padding: 3px 4px;
    border: 1px solid #000;
    background: #ffffe1;
    box-shadow: 3px 3px 3px rgba(0, 0, 0, 0.4);
  }
</style>
